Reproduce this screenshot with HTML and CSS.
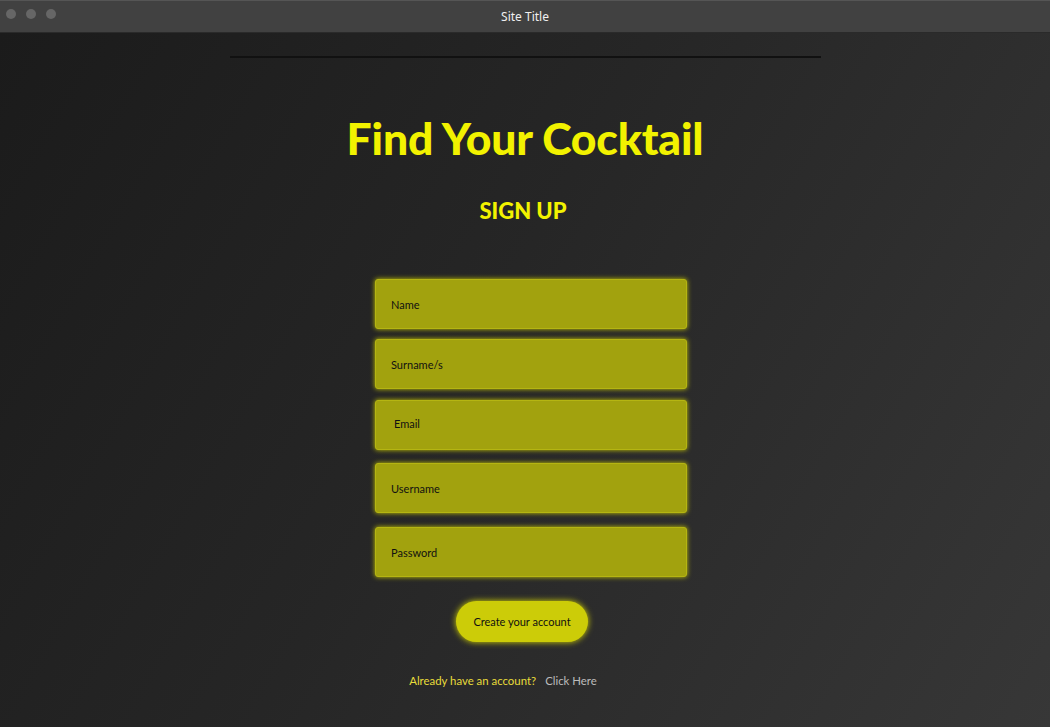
FILE: index.html
```html
<!DOCTYPE html>
<html>
<head>
<meta charset="utf-8">
<title>Site Title</title>
<link rel="stylesheet" href="styles.css">
</head>
<body>
<div class="window">
  <header class="titlebar">
    <div class="dots"><span class="dot"></span><span class="dot"></span><span class="dot"></span></div>
    <div class="title">Site Title</div>
  </header>
  <main class="page">
    <hr class="rule">
    <h1 class="brand">Find Your Cocktail</h1>
    <h2 class="subtitle">SIGN UP</h2>
    <form class="form">
      <div class="field f1">Name</div>
      <div class="field f2">Surname/s</div>
      <div class="field f3 indent">Email</div>
      <div class="field f4">Username</div>
      <div class="field f5">Password</div>
      <div class="btn">Create your account</div>
    </form>
    <p class="login"><span class="q">Already have an account?</span><span class="link">Click Here</span></p>
  </main>
</div>
</body>
</html>
```
FILE: styles.css
```css
* { box-sizing: border-box; }
html, body { margin: 0; padding: 0; }
body { width: 1050px; height: 727px; overflow: hidden; font-family: Lato, "Noto Sans", sans-serif; background: #1c1c1c; }
.window { width: 1050px; height: 727px; display: flex; flex-direction: column; }
.titlebar { height: 33px; flex: none; background: #414141; border-top: 1px solid #555; border-bottom: 1px solid #2a2a2a; position: relative; display: flex; align-items: center; justify-content: center; }
.dots { position: absolute; left: 6px; top: 8px; display: flex; gap: 10px; }
.dot { width: 10px; height: 10px; border-radius: 50%; background: #666; }
.title { color: #f0f0f0; font-size: 12px; font-family: "Noto Sans", sans-serif; }
.page { flex: 1; background: linear-gradient(120deg, #1b1b1b 0%, #262626 45%, #373737 100%); display: flex; flex-direction: column; align-items: center; }
.rule { width: 591px; margin: 23px 0 0 0; height: 2px; border: 0; background: #111; }
.brand { margin: 50px 0 0 0; font-size: 44.5px; font-weight: 900; color: #f2f200; line-height: 60px; letter-spacing: -0.2px; }
.subtitle { margin: 28px 0 0 0; font-size: 22px; font-weight: 900; color: #f2f200; line-height: 30px; margin-right: 4px; }
.form { margin-top: 53px; width: 312px; margin-left: 12px; display: flex; flex-direction: column; align-items: center; }
.field { width: 312px; height: 50px; background: #a2a20e; border: 1px solid #b5b512; border-radius: 3px; box-shadow: 0 0 5px #c8c800; color: #111; font-size: 11px; padding-left: 15px; display: flex; align-items: center; }
.f2 { margin-top: 10px; }
.f3 { margin-top: 11px; align-items: flex-start; padding-top: 16px; }
.f4 { margin-top: 13px; }
.f5 { margin-top: 14px; }
.indent { padding-left: 18px; }
.btn { margin-top: 24px; margin-right: 18px; width: 132px; height: 41px; border-radius: 21px; background: #cccc08; box-shadow: 0 0 6px #d8d800; color: #111; font-size: 11px; display: flex; align-items: center; justify-content: center; }
.login { margin: 32px 44px 0 0; font-size: 11.4px; }
.q { color: #e8dc3a; margin-right: 9px; }
.link { color: #bcbcbc; }
```
